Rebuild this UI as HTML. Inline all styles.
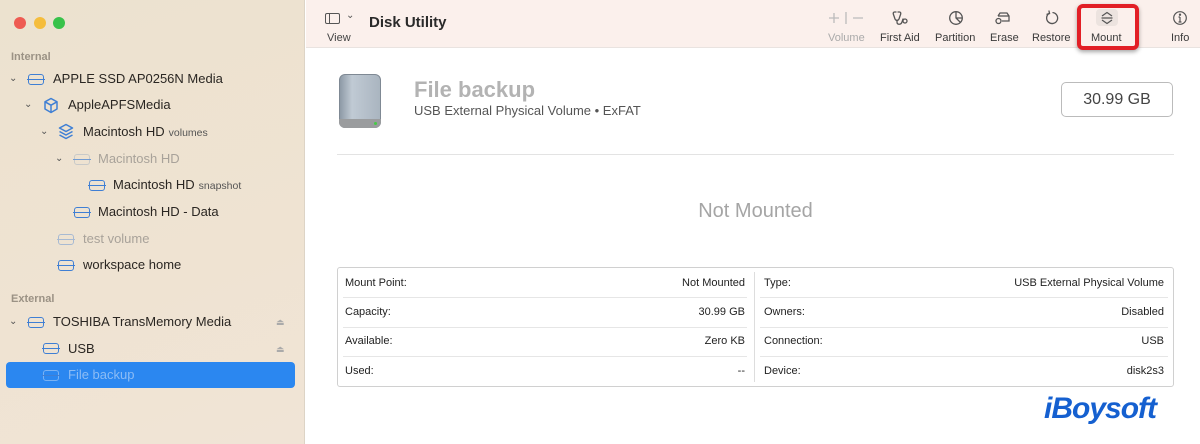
<!DOCTYPE html>
<html><head><meta charset="utf-8"><style>
*{margin:0;padding:0;box-sizing:border-box}
body{width:1200px;height:444px;overflow:hidden;font-family:"Liberation Sans",sans-serif;background:#fff;position:relative}
.sb{position:absolute;left:0;top:0;width:305px;height:444px;background:linear-gradient(160deg,#ece2cf,#efe3d2 60%,#f0e4d6);border-right:1px solid #ddd4c6}
.dot{position:absolute;top:17px;width:12px;height:12px;border-radius:50%}
.sec{position:absolute;left:11px;font-size:11px;color:#9b9285;font-weight:bold}
.row{position:absolute;font-size:13px;color:#2a2622;white-space:nowrap;height:20px;line-height:20px}
.row small{font-size:10.5px;color:#555;margin-left:4px}
.chev{position:absolute;font-size:10px;color:#555}
.ic{position:absolute;width:16px;height:11px;border:1.6px solid #3f7fd4;border-radius:3px 3px 3px 3px}
.ic:after{content:"";position:absolute;left:-1.6px;right:-1.6px;top:4px;border-top:1.6px solid #3f7fd4}
.tb{position:absolute;left:306px;top:0;right:0;height:48px;background:#fbf0ec;border-bottom:1px solid #e9e3e0}
.tl{position:absolute;top:32px;font-size:11px;color:#3a3a3a;text-align:center}
.tsvg{position:absolute;top:10px}
.lbl{position:absolute;font-size:11px;color:#222}
</style></head><body>
<div class="sb">
<div class="dot" style="left:14px;background:#ee5b52"></div>
<div class="dot" style="left:34px;background:#f5bd3c"></div>
<div class="dot" style="left:53px;background:#38c24a"></div>
<div class="sec" style="top:51px">Internal</div>
<div class="chev" style="left:9px;top:73px">⌄</div><div class="ic" style="left:28px;top:74px"></div><div class="row" style="left:53px;top:69px">APPLE SSD AP0256N Media</div>
<div class="chev" style="left:24px;top:99px">⌄</div>
<svg style="position:absolute;left:43px;top:97px" width="16" height="17" viewBox="0 0 16 17" fill="none" stroke="#3f7fd4" stroke-width="1.5" stroke-linejoin="round"><path d="M8 1.5L14 4.8V12L8 15.5L2 12V4.8Z"/><path d="M2 4.8L8 8.2L14 4.8M8 8.2V15.5"/></svg>
<div class="row" style="left:68px;top:95px">AppleAPFSMedia</div>
<div class="chev" style="left:40px;top:126px">⌄</div>
<svg style="position:absolute;left:58px;top:123px" width="16" height="17" viewBox="0 0 16 17" fill="none" stroke="#3f7fd4" stroke-width="1.5" stroke-linejoin="round"><path d="M8 1.5L14.5 5L8 8.5L1.5 5Z"/><path d="M1.5 8.5L8 12L14.5 8.5"/><path d="M1.5 12L8 15.5L14.5 12"/></svg>
<div class="row" style="left:83px;top:122px">Macintosh HD<small>volumes</small></div>
<div class="chev" style="left:55px;top:153px">⌄</div><div class="ic" style="left:74px;top:154px;border-color:#b8bfc6;opacity:.7"></div><div class="row" style="left:98px;top:149px;color:#a8a29a">Macintosh HD</div>
<div class="ic" style="left:89px;top:180px"></div><div class="row" style="left:113px;top:175px">Macintosh HD<small>snapshot</small></div>
<div class="ic" style="left:74px;top:207px"></div><div class="row" style="left:98px;top:202px">Macintosh HD - Data</div>
<div class="ic" style="left:58px;top:234px;opacity:.4"></div><div class="row" style="left:83px;top:229px;color:#a8a29a">test volume</div>
<div class="ic" style="left:58px;top:260px"></div><div class="row" style="left:83px;top:255px">workspace home</div>
<div class="sec" style="top:293px">External</div>
<div class="chev" style="left:9px;top:316px">⌄</div><div class="ic" style="left:28px;top:317px"></div><div class="row" style="left:53px;top:312px">TOSHIBA TransMemory Media</div><div class="row" style="left:276px;top:312px;font-size:9px;color:#aaa">⏏</div>
<div class="ic" style="left:43px;top:343px"></div><div class="row" style="left:68px;top:339px">USB</div><div class="row" style="left:276px;top:339px;font-size:9px;color:#aaa">⏏</div>
<div style="position:absolute;left:6px;top:362px;width:289px;height:26px;background:#2b87f0;border-radius:4px"></div>
<div class="ic" style="left:43px;top:370px;border-color:#7ab2f3"></div><div class="row" style="left:68px;top:365px;color:#8cbcf5">File backup</div>
</div>
<div class="tb">
<div style="position:absolute;left:19px;top:13px;width:15px;height:11px;border:1.5px solid #555;border-radius:2px"></div>
<div style="position:absolute;left:23px;top:13px;height:11px;border-left:1.5px solid #555"></div>
<div style="position:absolute;left:40px;top:10px;font-size:10px;color:#555">⌄</div>
<div class="lbl" style="left:21px;top:32px;color:#444">View</div>
<div style="position:absolute;left:63px;top:14px;font-size:15px;font-weight:bold;color:#2a2a2a">Disk Utility</div>
<svg class="tsvg" style="left:520px" width="40" height="16" viewBox="0 0 40 16" stroke="#bbb" stroke-width="1.3"><path d="M3 8H13M8 3V13M20 2V14M27 8H37"/></svg>
<div class="tl" style="left:522px;color:#aaa">Volume</div>
<svg class="tsvg" style="left:586px" width="18" height="17" viewBox="0 0 18 17" fill="none" stroke="#555" stroke-width="1.3" stroke-linecap="round"><path d="M4 2H2.5C1.5 2 1 3 1.3 4L3 9C4 11 6 11 7 9L8.7 4C9 3 8.5 2 7.5 2H6"/><path d="M5 10V12C5 15 9 15 10 12L11 9"/><circle cx="13" cy="11" r="2"/></svg>
<div class="tl" style="left:574px">First Aid</div>
<svg class="tsvg" style="left:642px" width="16" height="16" viewBox="0 0 16 16" fill="none" stroke="#555" stroke-width="1.3"><circle cx="8" cy="8" r="6.3"/><path d="M8 1.7V8L12.5 12.5M8 8H14.3"/></svg>
<div class="tl" style="left:629px">Partition</div>
<svg class="tsvg" style="left:688px" width="18" height="16" viewBox="0 0 18 16" fill="none" stroke="#555" stroke-width="1.3"><path d="M4 6L6 3H13L15 6V11H8"/><path d="M4 6H15"/><circle cx="4.5" cy="11" r="2.5"/></svg>
<div class="tl" style="left:684px">Erase</div>
<svg class="tsvg" style="left:738px" width="16" height="16" viewBox="0 0 16 16" fill="none" stroke="#555" stroke-width="1.3" stroke-linecap="round"><path d="M5.5 3.2A5.5 5.5 0 1 0 9 2.6"/><path d="M5 1L5.5 3.5L3 4.2"/></svg>
<div class="tl" style="left:726px">Restore</div>
<div style="position:absolute;left:771px;top:4px;width:62px;height:46px;border:4px solid #e21f26;border-radius:6px;box-shadow:0 2px 4px rgba(0,0,0,.35);background:#fbf0ec"></div>
<div style="position:absolute;left:790px;top:9px;width:22px;height:17px;background:#ece3df;border-radius:4px"></div>
<svg class="tsvg" style="left:794px;top:11px" width="14" height="14" viewBox="0 0 14 14" fill="none" stroke="#555" stroke-width="1.2" stroke-linejoin="round"><path d="M2 5L7 1.5L12 5M2 9L7 12.5L12 9M1.5 7H12.5"/></svg>
<div class="tl" style="left:785px">Mount</div>
<svg class="tsvg" style="left:866px" width="16" height="16" viewBox="0 0 16 16" fill="none" stroke="#555" stroke-width="1.2"><circle cx="8" cy="8" r="6.3"/><path d="M8 7V12M6.5 12H9.5M6.5 7H8"/><circle cx="8" cy="4.7" r=".6" fill="#555"/></svg>
<div class="tl" style="left:865px">Info</div>
</div>
<div style="position:absolute;left:339px;top:74px;width:42px;height:54px;border-radius:6px;background:linear-gradient(90deg,#8e9aa6,#c0cad4 30%,#aab5c0);border:1px solid #7f8994"></div>
<div style="position:absolute;left:339px;top:119px;width:42px;height:9px;border-radius:0 0 6px 6px;background:#9a9c9e"></div>
<div style="position:absolute;left:374px;top:122px;width:3px;height:3px;border-radius:50%;background:#4c4"></div>
<div style="position:absolute;left:414px;top:77px;font-size:22px;font-weight:bold;color:#b3b3b3">File backup</div>
<div style="position:absolute;left:414px;top:103px;font-size:13px;color:#555">USB External Physical Volume • ExFAT</div>
<div style="position:absolute;left:1061px;top:82px;width:112px;height:35px;border:1px solid #bbb;border-radius:5px;font-size:16px;color:#444;text-align:center;line-height:33px">30.99 GB</div>
<div style="position:absolute;left:337px;top:154px;width:837px;border-top:1px solid #e3e3e3"></div>
<div style="position:absolute;left:337px;top:200px;width:837px;text-align:center;font-size:20px;color:#a5a5a5">Not Mounted</div>
<div style="position:absolute;left:337px;top:267px;width:837px;height:120px;border:1px solid #d0d0d0;border-radius:3px"></div>
<div style="position:absolute;left:754px;top:272px;height:110px;border-left:1px solid #ddd"></div>
<div style="position:absolute;left:343px;top:297px;width:404px;border-top:1px solid #e6e6e6"></div>
<div style="position:absolute;left:343px;top:327px;width:404px;border-top:1px solid #e6e6e6"></div>
<div style="position:absolute;left:343px;top:356px;width:404px;border-top:1px solid #e6e6e6"></div>
<div style="position:absolute;left:760px;top:297px;width:408px;border-top:1px solid #e6e6e6"></div>
<div style="position:absolute;left:760px;top:327px;width:408px;border-top:1px solid #e6e6e6"></div>
<div style="position:absolute;left:760px;top:356px;width:408px;border-top:1px solid #e6e6e6"></div>
<div class="lbl" style="left:345px;top:277px">Mount Point:</div><div class="lbl" style="right:455px;top:277px">Not Mounted</div>
<div class="lbl" style="left:345px;top:306px">Capacity:</div><div class="lbl" style="right:455px;top:306px">30.99 GB</div>
<div class="lbl" style="left:345px;top:335px">Available:</div><div class="lbl" style="right:455px;top:335px">Zero KB</div>
<div class="lbl" style="left:345px;top:365px">Used:</div><div class="lbl" style="right:455px;top:365px">--</div>
<div class="lbl" style="left:764px;top:277px">Type:</div><div class="lbl" style="right:36px;top:277px">USB External Physical Volume</div>
<div class="lbl" style="left:764px;top:306px">Owners:</div><div class="lbl" style="right:36px;top:306px">Disabled</div>
<div class="lbl" style="left:764px;top:335px">Connection:</div><div class="lbl" style="right:36px;top:335px">USB</div>
<div class="lbl" style="left:764px;top:365px">Device:</div><div class="lbl" style="right:36px;top:365px">disk2s3</div>
<div style="position:absolute;left:1044px;top:392px;font-size:30px;font-weight:bold;font-style:italic;color:#1560d0;letter-spacing:-1px">iBoysoft</div>
</body></html>
